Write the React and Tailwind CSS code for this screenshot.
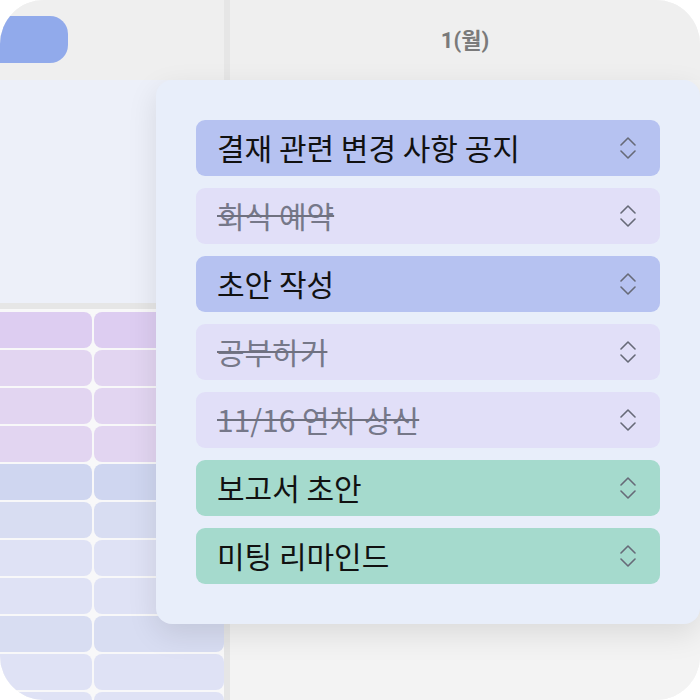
import React from "react";

const rows = [
  "bg-[#ddcdf1]",
  "bg-[#e2d5f1]",
  "bg-[#e2d5f1]",
  "bg-[#e2d5f1]",
  "bg-[#cfd6f0]",
  "bg-[#d8ddf2]",
  "bg-[#dfe2f5]",
  "bg-[#dfe2f5]",
  "bg-[#d8ddf2]",
  "bg-[#dfe2f5]",
  "bg-[#dfe2f5]",
];

const todos = [
  { title: "결재 관련 변경 사항 공지", tone: "bg-[#b6c2f1]", done: false },
  { title: "회식 예약", tone: "bg-[#e1dff8]", done: true },
  { title: "초안 작성", tone: "bg-[#b6c2f1]", done: false },
  { title: "공부하기", tone: "bg-[#e1dff8]", done: true },
  { title: "11/16 연차 상신", tone: "bg-[#e1dff8]", done: true },
  { title: "보고서 초안", tone: "bg-[#a5dacd]", done: false },
  { title: "미팅 리마인드", tone: "bg-[#a5dacd]", done: false },
];

const UpDown = () => (
  <svg width="16" height="22" viewBox="0 0 16 22" fill="none" stroke="#676a78" strokeWidth="1.6" strokeLinecap="round" strokeLinejoin="round">
    <path d="M1 8 L8 1 L15 8" />
    <path d="M1 14 L8 21 L15 14" />
  </svg>
);

const TodoRow = ({ title, tone, done }) => (
  <div className={`${tone} h-[56px] rounded-[9px] flex items-center justify-between pl-[21px] pr-[24px]`}>
    <span
      className={
        done
          ? "pb-[3px] text-[30px] leading-none text-[#767889] line-through decoration-[#6f7180] decoration-[2px]"
          : "pb-[3px] text-[30px] leading-none text-[#111]"
      }
    >
      {title}
    </span>
    <UpDown />
  </div>
);

export default function App() {
  return (
    <div className="w-[700px] h-[700px] bg-white font-['Noto_Sans_CJK_KR','Noto_Sans',sans-serif]">
      <div className="relative w-full h-full rounded-[44px] overflow-hidden flex bg-[#f3f3f3]">
        {/* left column */}
        <div className="w-[224px] flex flex-col overflow-hidden">
          <div className="h-[80px] bg-[#efefef] pt-[16px] shrink-0">
            <div className="w-[88px] h-[47px] -ml-[20px] rounded-[18px] bg-[#91aaeb]" />
          </div>
          <div className="h-[223px] bg-[#edf0f9] shrink-0" />
          <div className="h-[6px] bg-[#e6e6e6] shrink-0" />
          <div className="flex-1 bg-[#f8f8f9] pt-[3px]">
            <div className="grid grid-cols-[132px_130px] gap-x-[2px] gap-y-[2px] -ml-[40px]">
              {rows.map((c, i) => (
                <React.Fragment key={i}>
                  <div className={`${c} h-[36px] rounded-[8px]`} />
                  <div className={`${c} h-[36px] rounded-[8px]`} />
                </React.Fragment>
              ))}
            </div>
          </div>
        </div>

        <div className="w-[6px] bg-[#e6e6e6] shrink-0" />

        {/* right column */}
        <div className="flex-1 flex flex-col">
          <div className="h-[80px] bg-[#efefef] flex items-center justify-center shrink-0">
            <span className="text-[22px] font-bold text-[#7a7a7a] font-['Roboto','Noto_Sans_CJK_KR',sans-serif]">1(월)</span>
          </div>
          <div className="flex-1 bg-[#f3f3f3]" />
        </div>

        {/* todo popup */}
        <div className="absolute left-[156px] top-[80px] w-[544px] h-[544px] rounded-[16px] bg-[#e8eefa] shadow-[0_10px_30px_rgba(0,0,0,0.10)] p-[40px] flex flex-col gap-[12px]">
          {todos.map((t) => (
            <TodoRow key={t.title} {...t} />
          ))}
        </div>
      </div>
    </div>
  );
}
